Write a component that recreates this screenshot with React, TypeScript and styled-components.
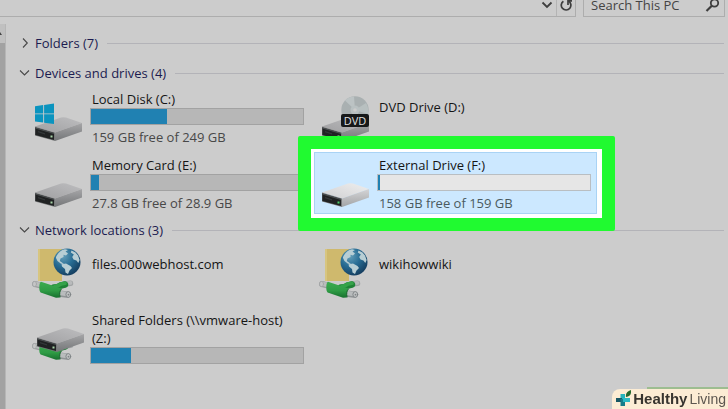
import React from "react";
import styled, { createGlobalStyle } from "styled-components";

const GlobalStyle = createGlobalStyle`
  * { box-sizing: border-box; }
  body {
    margin: 0;
    background: #cccccc;
    color: #151515;
    font-family: "Open Sans", "Noto Sans", sans-serif;
    font-size: 13px;
    line-height: 18px;
  }
  button, input { font: inherit; color: inherit; }
`;

const Window = styled.div`
  display: flex;
  flex-direction: column;
  min-height: 100vh;
  overflow: hidden;
`;

const Toolbar = styled.header`
  display: flex;
  align-items: flex-end;
  gap: 7px;
  height: 17px;
  padding-right: 3px;
  overflow: hidden;
`;

const AddressBar = styled.div`
  display: flex;
  flex: 1;
  justify-content: flex-end;
  height: 24px;
  border: 1px solid #adadad;
  border-left: 0;
`;

const ToolButton = styled.button<{ $divided?: boolean }>`
  display: flex;
  align-items: center;
  justify-content: center;
  width: 19px;
  padding: 0;
  border: 0;
  border-left: ${(p) => (p.$divided ? "1px solid #b4b4b4" : "0")};
  background: none;
  color: #3e3e3e;
`;

const SearchBox = styled.label`
  display: flex;
  align-items: center;
  width: 142px;
  height: 24px;
  padding: 0 4px 0 7px;
  border: 1px solid #adadad;
  color: #444444;
`;

const SearchInput = styled.input`
  flex: 1;
  min-width: 0;
  padding: 0;
  border: 0;
  outline: 0;
  background: none;
  &::placeholder { color: #444444; opacity: 1; }
`;

const Body = styled.div`
  display: flex;
  flex: 1;
`;

const ScrollGutter = styled.div`
  display: flex;
  flex-direction: column;
  width: 6px;
  margin-top: 7px;
  background: #a2a2a2;
  border-right: 1px solid #b6b6b6;
`;

const ScrollArrow = styled.button`
  display: flex;
  height: 19px;
  padding: 8px 0 0;
  border: 0;
  background: #c0c0c0;
  color: #444444;
`;

const Content = styled.main`
  flex: 1;
  padding: 13px 4px 0 13px;
`;

const GroupHeader = styled.h2`
  display: flex;
  align-items: center;
  gap: 9px;
  height: 26px;
  margin: 0;
  font: inherit;
  &::after {
    content: "";
    flex: 1;
    height: 1px;
    background: #b3b3b8;
  }
`;

const GroupToggle = styled.button`
  display: flex;
  align-items: center;
  gap: 4px;
  padding: 0;
  border: 0;
  background: none;
  color: #1c1c50;
  white-space: nowrap;
`;

const CollapsedSection = styled.section`
  padding-bottom: 1px;
`;

const Section = styled.section`
  margin-top: 3px;
`;

const Tiles = styled.ul<{ $rowGap: number }>`
  display: grid;
  grid-template-columns: repeat(auto-fill, 283px);
  gap: ${(p) => p.$rowGap}px 4px;
  margin: 0 0 0 8px;
  padding: 0;
  list-style: none;
`;

const TileButton = styled.button<{ $selected?: boolean }>`
  position: relative;
  display: flex;
  gap: 3px;
  width: 100%;
  height: 62px;
  padding: 0 6px 0 4px;
  border: 0;
  background: ${(p) => (p.$selected ? "#cce8ff" : "none")};
  box-shadow: ${(p) => (p.$selected ? "inset 0 0 0 1px #a9d3f5" : "none")};
  text-align: left;
`;

const Highlight = styled.span`
  position: absolute;
  inset: -16px -18px -17px -16px;
  border: 13px solid #20fa30;
  border-radius: 2px;
  box-shadow: inset 0 0 0 3px #ffffff, inset -5px -4px 0 0 #ffffff;
  pointer-events: none;
`;

const Details = styled.span<{ $plain?: boolean }>`
  display: flex;
  flex: 1;
  flex-direction: column;
  min-width: 0;
  padding-top: ${(p) => (p.$plain ? 12 : 4)}px;
`;

const Name = styled.span`
  padding-left: 2px;
`;

const Note = styled.span<{ $selected?: boolean }>`
  padding: 3px 0 0 2px;
  color: ${(p) => (p.$selected ? "#4a5a60" : "#484848")};
`;

const Track = styled.span<{ $selected?: boolean }>`
  display: flex;
  height: 17px;
  border: 1px solid ${(p) => (p.$selected ? "#b9bec2" : "#a2a2a2")};
  background: ${(p) => (p.$selected ? "#e6e6e6" : "#b7b7b7")};
`;

const Fill = styled.span`
  background: #2081b2;
`;

const IconSvg = styled.svg`
  flex: none;
  overflow: visible;
`;

const Watermark = styled.aside`
  position: fixed;
  right: 0;
  bottom: 0;
  display: flex;
  align-items: center;
  gap: 2px;
  height: 20px;
  padding: 0 2px 0 3px;
  border-top-left-radius: 8px;
  background: #fcecd4;
  color: #37342f;
  font-family: "Liberation Sans", Arial, sans-serif;
  font-size: 15px;
  &::before {
    content: "";
    position: absolute;
    top: -2px;
    left: 35px;
    right: 0;
    height: 2px;
    background: #9dbd90;
  }
`;

const Living = styled.span`
  color: #5d5750;
  font-size: 14px;
`;

type Kind = "windows" | "drive" | "dvd" | "bright" | "web" | "shared";

function Drive({ bright }: { bright?: boolean }) {
  const id = bright ? "b" : "d";
  return (
    <g>
      <defs>
        <linearGradient id={`top-${id}`} x1="0" y1="1" x2="1" y2="0">
          <stop offset="0" stopColor={bright ? "#d0d0d2" : "#a0a0a2"} />
          <stop offset="1" stopColor={bright ? "#eeeeee" : "#bdbdbf"} />
        </linearGradient>
        <linearGradient id={`side-${id}`} x1="0" y1="0" x2="0" y2="1">
          <stop offset="0" stopColor={bright ? "#d4d4d6" : "#a6a6a8"} />
          <stop offset="1" stopColor={bright ? "#a2a4a6" : "#747678"} />
        </linearGradient>
      </defs>
      <path d="M4 40.5 L30 31.4 Q32.5 30.8 35 31.6 L51 37 L24 46.5Z" fill={`url(#top-${id})`} />
      <path d="M24 46.5 L51 37 V45.5 L24 55Z" fill={`url(#side-${id})`} />
      <path d="M4 40.5 L24 46.5 V55 L4 49.5Z" fill="#77797a" />
      <path d="M4.3 41.4 L23 47 V54 L4.3 48.9Z" fill="#202223" />
      <path d="M4.3 41.4 L23 47 V48 L4.3 42.4Z" fill="#4c5052" />
      <path d="M7 45 L14 47.2 V48.4 L7 46.3Z" fill="#34383a" />
      <rect x="19.5" y="49.5" width="2" height="2" fill={bright ? "#4ad16b" : "#a7d4a8"} />
    </g>
  );
}

function Plug() {
  return (
    <g fill="none" strokeLinecap="round">
      <defs>
        <linearGradient id="cable" x1="0" y1="0" x2="0" y2="1">
          <stop offset="0" stopColor="#3cab50" />
          <stop offset=".55" stopColor="#2f9c45" />
          <stop offset="1" stopColor="#17702e" />
        </linearGradient>
      </defs>
      <path d="M34 40 L39.5 39.3" stroke="#a2a5a6" strokeWidth="5.5" />
      <path d="M34 39.6 L39.5 38.9" stroke="#b9bbbc" strokeWidth="3.6" />
      <path d="M4 40 L11 41.8" stroke="#999c9d" strokeWidth="6" />
      <path d="M4 39.6 L11 41.4" stroke="#bbbdbd" strokeWidth="4.2" />
      <ellipse cx="3.5" cy="40" rx="2" ry="2.6" fill="#c4c5c5" stroke="#a1a4a5" strokeWidth=".7" />
      <path d="M23 43.5 Q27 43.5 29.5 41.5 L34 40.5" stroke="#1f8236" strokeWidth="6.5" />
      <path d="M24 42.2 Q27.5 42 30 40 L34 39.3" stroke="#35a249" strokeWidth="3.6" />
      <path d="M28 49.5 L36 50.6" stroke="#8f9395" strokeWidth="6.5" />
      <path d="M28 48.9 L36 50" stroke="#b9bcbd" strokeWidth="4.4" />
      <ellipse cx="37.3" cy="50.5" rx="2.4" ry="2.9" fill="#c2c4c5" stroke="#7f8486" strokeWidth="1" />
      <circle cx="37.5" cy="50.7" r=".9" fill="#7f8486" />
      <path d="M10 37.8 L30.5 44.6 Q28.2 47 28.8 53.4 L25 53.8 L9.6 48.4 Q8.2 47.5 8.3 42.6 Q8.6 38.2 10 37.8Z" fill="url(#cable)" />
      <path d="M29 53 Q27.8 47.5 30.4 45" stroke="#15652a" strokeWidth="1" />
    </g>
  );
}

function Globe() {
  return (
    <g>
      <defs>
        <radialGradient id="sea" cx="35%" cy="28%" r="75%">
          <stop offset="0" stopColor="#659fb9" />
          <stop offset=".5" stopColor="#286d94" />
          <stop offset="1" stopColor="#153e60" />
        </radialGradient>
      </defs>
      <circle cx="36" cy="19" r="13.5" fill="url(#sea)" />
      <g fill="#b8ced4">
        <path d="M25 14 Q28 7.5 34 6.2 L37 7 L34.5 8.5 L37 10.5 L35 12.4 L32.5 11.7 L32.5 14 L29.5 15.5 L28.8 18 L31 19.4 L33 21 L30 20.7 L26.5 18 L25 15Z" />
        <path d="M30.5 21.2 L35 20.6 L39.5 23 L41 25 L38.5 27.5 L37 31 L34.5 29.5 L34 26 L31 23.5Z" />
        <path d="M40.5 7.5 L44.5 9.5 L47 12.5 L48.6 17 L47.3 20 L45.4 17.5 L42.5 16.6 L41.2 14 L42.8 11.4 L39.8 9.6Z" />
      </g>
    </g>
  );
}

function TileIcon({ kind }: { kind: Kind }) {
  return (
    <IconSvg width="56" height="62" viewBox="0 0 56 62" aria-hidden="true">
      {kind !== "web" && kind !== "shared" && <Drive bright={kind === "bright"} />}
      {kind === "windows" && (
        <g fill="#0b94bf">
          <path d="M4 20.2 L12.2 19.1 V27.4 H4Z" />
          <path d="M13.1 19 L23 17.6 V27.4 H13.1Z" />
          <path d="M4 28.3 H12.2 V36.6 L4 35.5Z" />
          <path d="M13.1 28.3 H23 V38 L13.1 36.7Z" />
        </g>
      )}
      {kind === "dvd" && (
        <g>
          <circle cx="37" cy="24" r="13.7" fill="#a9b0b1" />
          <path d="M37 24 L27 14.5 Q31 10.5 36 10.5Z" fill="#bcc3c4" />
          <path d="M37 24 L48 17 Q51 22 50 28Z" fill="#b8c0c0" />
          <circle cx="37" cy="24" r="4.5" fill="#b9c1c2" />
          <circle cx="37" cy="24" r="1.8" fill="#cccccc" />
          <rect x="23" y="28" width="28" height="13" rx="2" fill="#161819" />
          <text x="37" y="38.5" textAnchor="middle" fill="#e1e1e1" fontSize="11" fontFamily="Open Sans, sans-serif">DVD</text>
        </g>
      )}
      {kind === "web" && (
        <g>
          <path d="M7 6 H31 V38 H7Z" fill="#cfb96d" />
          <path d="M7 6 H9 V38 H7Z" fill="#d7c580" />
          <Globe />
          <g transform="translate(0 1)"><Plug /></g>
        </g>
      )}
      {kind === "shared" && (
        <g>
          <g transform="translate(0 -1)"><Plug /></g>
          <g transform="translate(2 -10)"><Drive /></g>
        </g>
      )}
    </IconSvg>
  );
}

interface TileProps {
  kind: Kind;
  name: string;
  used?: number;
  note?: string;
  selected?: boolean;
}

function Tile({ kind, name, used, note, selected }: TileProps) {
  return (
    <li>
      <TileButton type="button" $selected={selected} aria-pressed={!!selected}>
        {selected && <Highlight />}
        <TileIcon kind={kind} />
        <Details $plain={used === undefined}>
          <Name>{name}</Name>
          {used !== undefined && (
            <Track $selected={selected} role="meter" aria-label={`${name} used space`} aria-valuenow={used} aria-valuemin={0} aria-valuemax={100}>
              <Fill style={{ width: `${used}%` }} />
            </Track>
          )}
          {note && <Note $selected={selected}>{note}</Note>}
        </Details>
      </TileButton>
    </li>
  );
}

function Group({ title, open }: { title: string; open?: boolean }) {
  return (
    <GroupHeader>
      <GroupToggle type="button" aria-expanded={!!open}>
        <svg width="12" height="12" viewBox="0 0 12 12" fill="none" stroke="#484848" strokeWidth="1.1" aria-hidden="true">
          <path d={open ? "M1 3.5 L5.5 8 L10 3.5" : "M4 1.5 L8.3 6 L4 10.5"} />
        </svg>
        {title}
      </GroupToggle>
    </GroupHeader>
  );
}

export default function App() {
  return (
    <Window>
      <GlobalStyle />
      <Toolbar>
        <AddressBar>
          <ToolButton type="button" aria-label="Previous locations">
            <svg width="12" height="12" viewBox="0 0 12 12" fill="none" stroke="currentColor" strokeWidth="1.8">
              <path d="M1.5 3.5 L6 8 L10.5 3.5" />
            </svg>
          </ToolButton>
          <ToolButton type="button" $divided aria-label="Refresh">
            <svg width="12" height="14" viewBox="0 0 12 14" fill="none" stroke="currentColor" strokeWidth="1.7">
              <path d="M8.4 3 A4.8 4.8 0 1 1 3.4 3.2" />
              <path d="M8 7 V2.8 H12" />
            </svg>
          </ToolButton>
        </AddressBar>
        <SearchBox>
          <SearchInput type="text" placeholder="Search This PC" aria-label="Search This PC" />
          <svg width="15" height="15" viewBox="0 0 15 15" fill="none" stroke="#3e3e3e" aria-hidden="true">
            <circle cx="9.5" cy="5" r="3.7" strokeWidth="1.8" />
            <path d="M6.8 7.8 L1.5 13" strokeWidth="2.2" />
          </svg>
        </SearchBox>
      </Toolbar>
      <Body>
        <ScrollGutter>
          <ScrollArrow type="button" aria-label="Scroll up">
            <svg width="4" height="4" viewBox="0 0 4 4" aria-hidden="true"><path d="M0 0 L2 3 H0Z" fill="currentColor" /></svg>
          </ScrollArrow>
        </ScrollGutter>
        <Content>
          <CollapsedSection>
            <Group title="Folders (7)" />
          </CollapsedSection>
          <Section>
            <Group title="Devices and drives (4)" open />
            <Tiles $rowGap={4}>
              <Tile kind="windows" name="Local Disk (C:)" used={36} note="159 GB free of 249 GB" />
              <Tile kind="dvd" name="DVD Drive (D:)" />
              <Tile kind="drive" name="Memory Card (E:)" used={4} note="27.8 GB free of 28.9 GB" />
              <Tile kind="bright" name="External Drive (F:)" used={1} note="158 GB free of 159 GB" selected />
            </Tiles>
          </Section>
          <Section>
            <Group title="Network locations (3)" open />
            <Tiles $rowGap={2}>
              <Tile kind="web" name="files.000webhost.com" />
              <Tile kind="web" name="wikihowwiki" />
              <Tile kind="shared" name="Shared Folders (\\vmware-host) (Z:)" used={19} />
            </Tiles>
          </Section>
        </Content>
      </Body>
      <Watermark>
        <svg width="16" height="18" viewBox="0 0 16 18" aria-hidden="true">
          <path d="M5.5 4 H10 V9 H5.5Z" fill="#26b4bd" />
          <path d="M1 8 H7 V12 H1Z" fill="#175764" />
          <path d="M5.5 9 H10 V16 H5.5Z" fill="#167c89" />
          <path d="M8 8 H15 V12 H8Z" fill="#2bb9c4" />
          <path d="M11 7 Q10 2 16 0 Q17 6 11 7Z" fill="#25692e" />
        </svg>
        <b>Healthy</b>
        <Living>Living</Living>
      </Watermark>
    </Window>
  );
}
